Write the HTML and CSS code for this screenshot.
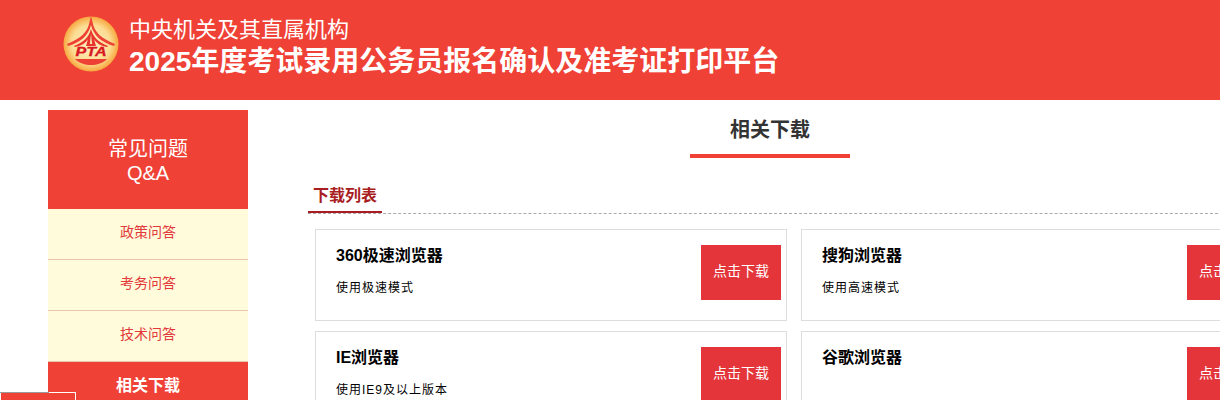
FILE: index.html
```html
<!DOCTYPE html>
<html lang="zh-CN">
<head>
    <meta charset="UTF-8">
    <title>相关下载</title>
    <link rel="stylesheet" href="styles.css">
</head>
<body>
    <div class="header">
        <svg class="logo" width="56" height="56" viewBox="0 0 56 56">
            <defs>
                <radialGradient id="logo-fill" cx="50%" cy="50%" r="50%">
                    <stop offset="0%" stop-color="#fff1c4"/>
                    <stop offset="70%" stop-color="#fcdc92"/>
                    <stop offset="100%" stop-color="#f7a83f"/>
                </radialGradient>
            </defs>
            <circle cx="28" cy="28" r="27.5" fill="url(#logo-fill)"/>
            <path d="M28 0 L29.5 6 C31 16 39 23 52 28 L51 30 C38 26 31 20 28 9 C25 20 18 26 5 30 L4 28 C17 23 25 16 26.5 6 Z" fill="#ee4135"/>
            <path d="M28 13 C30 21 35 26 45 30 L44 31 C38 30 33 27 31 23 L33 30 H23 L25 23 C23 27 18 30 12 31 L11 30 C21 26 26 21 28 13 Z" fill="#e8362f"/>
            <path d="M28 18 L26.8 28 H29.2 Z" fill="#fde3a6"/>
            <text class="logo-text" x="28" y="40" text-anchor="middle" textLength="31" lengthAdjust="spacingAndGlyphs">PTA</text>
            <path d="M12 43 H44 C40 47 34 49 28 49 C22 49 16 47 12 43 Z" fill="#ee4135"/>
        </svg>
        <div class="header-titles">
            <div class="header-sub">中央机关及其直属机构</div>
            <div class="header-main">2025年度考试录用公务员报名确认及准考证打印平台</div>
        </div>
    </div>

    <div class="page">
        <div class="sidebar">
            <div class="side-head">
                <div>常见问题</div>
                <div>Q&amp;A</div>
            </div>
            <a class="side-item">政策问答</a>
            <a class="side-item">考务问答</a>
            <a class="side-item">技术问答</a>
            <a class="side-item active">相关下载</a>
        </div>

        <div class="main">
            <div class="main-title"><span>相关下载</span></div>
            <div class="list-head"><span>下载列表</span></div>
            <div class="cards">
                <div class="card">
                    <div class="card-info">
                        <h3>360极速浏览器</h3>
                        <p>使用极速模式</p>
                    </div>
                    <a class="btn">点击下载</a>
                </div>
                <div class="card">
                    <div class="card-info">
                        <h3>搜狗浏览器</h3>
                        <p>使用高速模式</p>
                    </div>
                    <a class="btn">点击下载</a>
                </div>
                <div class="card">
                    <div class="card-info">
                        <h3>IE浏览器</h3>
                        <p>使用IE9及以上版本</p>
                    </div>
                    <a class="btn">点击下载</a>
                </div>
                <div class="card">
                    <div class="card-info">
                        <h3>谷歌浏览器</h3>
                        <p></p>
                    </div>
                    <a class="btn">点击下载</a>
                </div>
            </div>
        </div>
    </div>

    <div class="corner-tab"></div>
</body>
</html>
```

FILE: styles.css
```css
* {
    margin: 0;
    padding: 0;
    box-sizing: border-box;
}

body {
    font-family: "Liberation Sans", "Noto Sans CJK SC", sans-serif;
    color: #333;
    background: #fff;
    width: 1220px;
    height: 400px;
    overflow: hidden;
    position: relative;
}

.header {
    height: 100px;
    background: #ef4136;
    color: #fff;
    display: flex;
    align-items: center;
    padding: 0 0 8px 63px;
}

.logo {
    flex: none;
    margin-bottom: 4px;
}

.logo-text {
    font-family: "Liberation Sans", sans-serif;
    font-size: 12px;
    font-weight: bold;
    font-style: italic;
    fill: #d9181f;
    stroke: #d9181f;
    stroke-width: 0.3px;
}

.header-titles {
    margin-left: 10px;
}

.header-sub {
    font-size: 22px;
    line-height: 30px;
}

.header-main {
    font-size: 28px;
    line-height: 32px;
    font-weight: bold;
    white-space: nowrap;
    margin-top: 1px;
}

.page {
    display: flex;
    width: 1300px;
    padding: 10px 0 0 48px;
}

.sidebar {
    flex: none;
    width: 200px;
}

.side-head {
    height: 99px;
    background: #ef4136;
    color: #fff;
    font-size: 20px;
    line-height: 24px;
    text-align: center;
    padding-top: 27px;
}

.side-item {
    display: block;
    height: 51px;
    line-height: 46px;
    background: #fffbdb;
    border-bottom: 1px solid #e9c4b0;
    color: #e2383a;
    font-size: 14px;
    text-align: center;
}

.side-item.active {
    background: #ef4136;
    color: #fff;
    font-size: 16px;
    font-weight: bold;
    line-height: 47px;
}

.main {
    flex: none;
    width: 956px;
    margin-left: 44px;
    padding-left: 16px;
}

.main-title {
    text-align: center;
    margin-left: -16px;
}

.main-title span {
    display: inline-block;
    width: 160px;
    height: 48px;
    line-height: 40px;
    border-bottom: 4px solid #ef4136;
    font-size: 20px;
    font-weight: bold;
    color: #333;
}

.list-head {
    margin-top: 27px;
    height: 29px;
    border-bottom: 1px dashed #aaa;
}

.list-head span {
    display: inline-block;
    height: 28px;
    padding: 0 5px;
    line-height: 22px;
    font-size: 16px;
    font-weight: bold;
    color: #a81c22;
    border-bottom: 2px solid #a81c22;
}

.cards {
    display: grid;
    grid-template-columns: 472px 472px;
    gap: 10px 14px;
    margin: 15px 0 0 7px;
}

.card {
    height: 92px;
    border: 1px solid #ddd;
    display: flex;
    justify-content: space-between;
    padding: 16px 5px 0 20px;
}

.card h3 {
    font-size: 16px;
    line-height: 20px;
    color: #000;
}

.card p {
    font-size: 12px;
    line-height: 18px;
    letter-spacing: 1px;
    color: #000;
    margin-top: 13px;
}

.btn {
    flex: none;
    display: block;
    width: 80px;
    height: 55px;
    margin-top: -1px;
    background: #e4353b;
    color: #fff;
    font-size: 14px;
    line-height: 53px;
    text-align: center;
}

/* tab stuck to the bottom-left corner, over the sidebar */
.corner-tab {
    position: absolute;
    left: 0;
    top: 392px;
    width: 76px;
    height: 60px;
    background: #ef4136;
    border: 1px solid #fff;
}

.corner-tab::before {
    content: '';
    position: absolute;
    left: -1px;
    top: -1px;
    width: 49px;
    height: 1px;
    background: #999;
}
```
